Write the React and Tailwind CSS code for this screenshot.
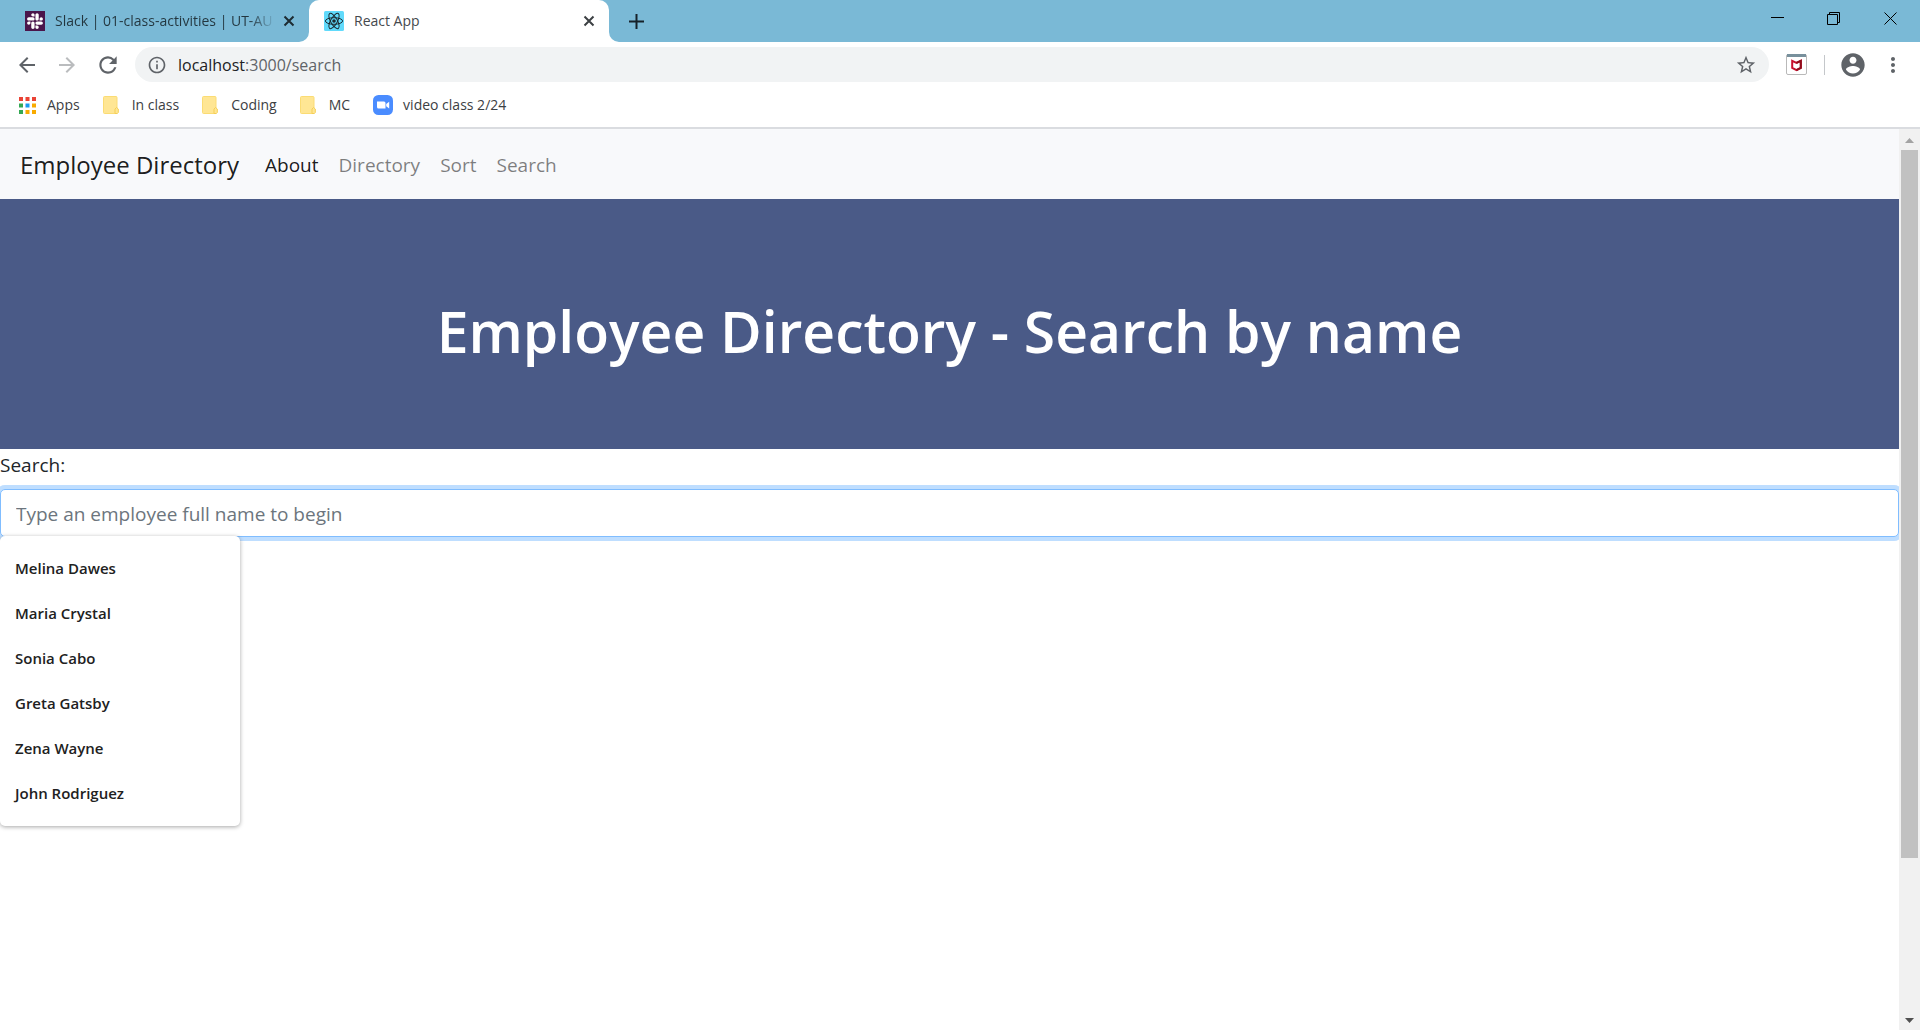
import React, { useState } from "react";
import { FaSlack } from "react-icons/fa";
import {
  MdArrowBack,
  MdArrowForward,
  MdInfoOutline,
  MdMoreVert,
  MdRefresh,
  MdStarBorder,
} from "react-icons/md";

const font = "font-['Segoe_UI','Open_Sans','Noto_Sans',sans-serif]";

function SlackIcon() {
  return (
    <span className="grid size-5 shrink-0 place-items-center bg-[#4a154b] text-white">
      <FaSlack className="size-[18px]" aria-hidden="true" />
    </span>
  );
}

function ReactIcon() {
  return (
    <svg viewBox="0 0 20 20" className="size-5 shrink-0" aria-hidden="true">
      <rect width="20" height="20" rx="1.5" fill="#61dafb" />
      <g fill="none" stroke="#1c2a30" strokeWidth="1">
        <ellipse cx="10" cy="10" rx="8.6" ry="3.3" />
        <ellipse cx="10" cy="10" rx="8.6" ry="3.3" transform="rotate(60 10 10)" />
        <ellipse cx="10" cy="10" rx="8.6" ry="3.3" transform="rotate(120 10 10)" />
      </g>
      <circle cx="10" cy="10" r="1.8" fill="#1c2a30" />
    </svg>
  );
}

function CloseIcon() {
  return (
    <svg viewBox="0 0 12 12" className="size-3" aria-hidden="true">
      <path d="M1.5 1.5l9 9M10.5 1.5l-9 9" stroke="currentColor" strokeWidth="2" />
    </svg>
  );
}

function TabFlare({ className }) {
  return (
    <svg viewBox="0 0 10 10" className={`absolute bottom-0 size-2.5 ${className}`} aria-hidden="true">
      <path d="M10 0v10H0A10 10 0 0 0 10 0z" fill="#fff" />
    </svg>
  );
}

function Tab({ icon, title, active }) {
  return (
    <div
      className={`relative flex h-full w-[300px] shrink-0 items-center pr-[11px] ${
        active ? "rounded-t-[10px] bg-white pl-[15px] text-[#45494d]" : "pl-4 text-[#23363f]"
      }`}
    >
      {active && <TabFlare className="-left-2.5" />}
      {icon}
      <button
        type="button"
        className={`ml-2.5 h-6 flex-1 text-left text-sm whitespace-nowrap ${
          active ? "" : "bg-linear-to-r from-[#23363f] from-88% to-transparent bg-clip-text text-transparent"
        }`}
      >
        {title}
      </button>
      <button type="button" aria-label="Close tab" className={`ml-1 grid size-[18px] place-items-center ${active ? "text-[#3c4043]" : "text-[#1d2b32]"}`}>
        <CloseIcon />
      </button>
      {active && <TabFlare className="-right-2.5 -scale-x-100" />}
    </div>
  );
}

function TitleBar() {
  return (
    <div className="flex h-[42px] shrink-0 bg-[#7ab9d6] pl-[9px]">
      <Tab icon={<SlackIcon />} title="Slack | 01-class-activities | UT-AU" />
      <Tab icon={<ReactIcon />} title="React App" active />
      <button type="button" aria-label="New tab" className="ml-4 grid w-[22px] place-items-center">
        <svg viewBox="0 0 15 15" className="size-[15px]" aria-hidden="true">
          <path d="M7.5 0v15M0 7.5h15" stroke="#16222a" strokeWidth="2" />
        </svg>
      </button>
      <div className="ml-auto flex h-9">
        <button type="button" aria-label="Minimize" className="grid w-14 place-items-center">
          <svg viewBox="0 0 13 13" className="size-[13px]" aria-hidden="true">
            <path d="M0 5.5h13" stroke="#000" />
          </svg>
        </button>
        <button type="button" aria-label="Restore" className="grid w-14 place-items-center">
          <svg viewBox="0 0 13 13" className="size-[13px]" fill="none" stroke="#000" aria-hidden="true">
            <path d="M.5 2.5h10v10H.5zM2.5 2.5v-2h10v10h-2" />
          </svg>
        </button>
        <button type="button" aria-label="Close" className="grid w-[59px] place-items-center">
          <svg viewBox="0 0 13 13" className="size-[13px]" aria-hidden="true">
            <path d="M.5.5l12 12M12.5.5l-12 12" stroke="#000" />
          </svg>
        </button>
      </div>
    </div>
  );
}

function ShieldIcon() {
  return (
    <svg viewBox="0 0 21 21" className="size-[21px]" aria-hidden="true">
      <rect x=".5" y=".5" width="20" height="20" rx="1.5" fill="#fff" stroke="#b9b9b9" />
      <path d="M1 0h19v3H1z" fill="#78909c" />
      <path d="M6.2 6.8l4.3 2 4.3-2v7l-4.3 2.4-4.3-2.4z" fill="none" stroke="#c8102e" strokeWidth="2" />
      <path d="M10.5 8.8l4.3-2v7l-4.3 2.4" fill="none" stroke="#8f0d1c" strokeWidth="2" />
    </svg>
  );
}

function AvatarIcon() {
  return (
    <svg viewBox="0 0 24 24" className="size-7" fill="currentColor" aria-hidden="true">
      <path d="M12 2C6.48 2 2 6.48 2 12s4.48 10 10 10 10-4.48 10-10S17.52 2 12 2zm0 3c1.66 0 3 1.34 3 3s-1.34 3-3 3-3-1.34-3-3 1.34-3 3-3zm0 14.2c-2.5 0-4.71-1.28-6-3.22.03-1.99 4-3.08 6-3.08 1.99 0 5.97 1.09 6 3.08-1.29 1.94-3.5 3.22-6 3.22z" />
    </svg>
  );
}

function Toolbar() {
  return (
    <div className="flex h-[45px] shrink-0 items-center bg-white pr-[15px] pl-[15px] text-[#5f6368]">
      <div className="flex gap-4">
        <button type="button" aria-label="Back"><MdArrowBack className="size-6" /></button>
        <button type="button" aria-label="Forward" className="text-[#babcbe]"><MdArrowForward className="size-6" /></button>
        <button type="button" aria-label="Reload"><MdRefresh className="size-[26px]" /></button>
      </div>
      <div className="ml-[14px] flex h-[35px] flex-1 items-center rounded-full bg-[#f1f3f4] px-3">
        <MdInfoOutline className="size-5 shrink-0" />
        <div className="relative ml-[11px] flex-1 text-base">
          <input
            aria-label="Address"
            defaultValue="localhost:3000/search"
            className="absolute inset-0 w-full bg-transparent text-transparent outline-none"
          />
          <span className="pointer-events-none"><span className="text-[#202124]">localhost</span>:3000/search</span>
        </div>
        <button type="button" aria-label="Bookmark this page"><MdStarBorder className="size-[22px]" /></button>
      </div>
      <button type="button" aria-label="McAfee" className="ml-[17px]"><ShieldIcon /></button>
      <div className="ml-[17px] h-5 w-px bg-[#c4c7ca]" />
      <button type="button" aria-label="Profile" className="ml-[14px]"><AvatarIcon /></button>
      <button type="button" aria-label="Menu" className="ml-[14px]"><MdMoreVert className="size-6" /></button>
    </div>
  );
}

function AppsIcon() {
  const colors = ["#ea4335", "#ea4335", "#ea4335", "#34a853", "#1a9bf0", "#f9ab00", "#34a853", "#f9ab00", "#f9ab00"];
  return (
    <svg viewBox="0 0 17 17" className="size-[17px]" aria-hidden="true">
      {colors.map((c, i) => (
        <rect key={i} x={(i % 3) * 6.5} y={Math.floor(i / 3) * 6.5} width="4" height="4" fill={c} />
      ))}
    </svg>
  );
}

function FolderIcon() {
  return (
    <svg viewBox="0 0 16 18" className="h-[18px] w-4" aria-hidden="true">
      <path d="M1.5.5H13a1 1 0 0 1 1 1v16H1.500a1 1 0 0 1-1-1v-15a1 1 0 0 1 1-1z" fill="#ffe694" stroke="#fbdc74" />
      <path d="M12 17.500v-4.500l1.500-1.500 1.800 1.500v3.500l-1 1z" fill="#ffe694" stroke="#f5cf57" />
    </svg>
  );
}

function ZoomIcon() {
  return (
    <svg viewBox="0 0 20 20" className="size-5" aria-hidden="true">
      <rect width="20" height="20" rx="5.500" fill="#4a8cff" />
      <path d="M4 6.500h7a1.500 1.500 0 0 1 1.500 1.500v5.500H5.500A1.500 1.500 0 0 1 4 12zM13.200 9l3-2.200v6.600l-3-2.200z" fill="#fff" />
    </svg>
  );
}

const bookmarks = [
  { label: "Apps", icon: <AppsIcon />, gap: "gap-[11px]" },
  { label: "In class", icon: <FolderIcon />, gap: "gap-[13px]" },
  { label: "Coding", icon: <FolderIcon />, gap: "gap-[13px]" },
  { label: "MC", icon: <FolderIcon />, gap: "gap-[13px]" },
  { label: "video class 2/24", icon: <ZoomIcon />, gap: "gap-[10px]" },
];

function BookmarksBar() {
  return (
    <div className="flex h-[42px] shrink-0 items-center gap-[23px] border-b-2 border-[#dadce0] bg-white pb-1 pl-[19px] text-sm text-[#3c4043]">
      {bookmarks.map((b) => (
        <a key={b.label} href="#" className={`flex items-center ${b.gap}`}>
          {b.icon}
          {b.label}
        </a>
      ))}
    </div>
  );
}

function NavBar() {
  return (
    <nav className="flex h-[70px] items-center bg-[#f8f9fb] px-5 pt-0.5">
      <a href="#" className="text-2xl text-black/90">Employee Directory</a>
      <div className="ml-[26px] flex gap-5 text-[19px] text-black/50">
        <a href="#" className="text-black/90">About</a>
        <a href="#">Directory</a>
        <a href="#">Sort</a>
        <a href="#">Search</a>
      </div>
    </nav>
  );
}

const names = ["Melina Dawes", "Maria Crystal", "Sonia Cabo", "Greta Gatsby", "Zena Wayne", "John Rodriguez"];

function SearchForm() {
  const [query, setQuery] = useState("");
  return (
    <form onSubmit={(e) => e.preventDefault()}>
      <label htmlFor="search" className="mb-2 block text-[19px] leading-8 text-[#212529]">Search:</label>
      <div className="relative">
        <input
          id="search"
          value={query}
          onChange={(e) => setQuery(e.target.value)}
          placeholder="Type an employee full name to begin"
          className="block h-12 w-full rounded-[5px] border border-[#80bdff] bg-white px-[15px] pt-0.5 text-[19px] text-[#495057] shadow-[0_0_0_4px_#bfdeff] outline-none placeholder:text-[#6c757d]"
        />
        <ul className="absolute top-[47px] left-0 w-60 rounded-[5px] bg-white py-[10px] shadow-[0_1px_4px_rgba(0,0,0,0.35)]">
          {names.map((name) => (
            <li key={name}>
              <button type="button" onClick={() => setQuery(name)} className="flex h-[45px] w-full items-center px-[15px] text-[15px] font-semibold text-[#212121]">
                {name}
              </button>
            </li>
          ))}
        </ul>
      </div>
    </form>
  );
}

function ScrollBar() {
  return (
    <div className="flex w-[21px] shrink-0 flex-col items-center bg-[#f1f1f1]" aria-hidden="true">
      <svg viewBox="0 0 21 21" className="size-[21px] shrink-0"><path d="M6 14l4.500-5 4.500 5z" fill="#a3a3a3" /></svg>
      <div className="w-full flex-1 px-0.5"><div className="h-[82.4%] bg-[#c1c1c1]" /></div>
      <svg viewBox="0 0 21 21" className="size-[21px] shrink-0"><path d="M6 9h9l-4.500 5z" fill="#505050" /></svg>
    </div>
  );
}

export default function App() {
  return (
    <div className={`flex h-screen flex-col overflow-hidden bg-white ${font}`}>
      <TitleBar />
      <Toolbar />
      <BookmarksBar />
      <div className="flex min-h-0 flex-1">
        <main className="min-w-0 flex-1 overflow-hidden">
          <NavBar />
          <header className="flex h-[250px] items-center justify-center bg-[#4a5a87] pt-4">
            <h1 className="text-[57px] font-semibold text-white">Employee Directory - Search by name</h1>
          </header>
          <SearchForm />
        </main>
        <ScrollBar />
      </div>
    </div>
  );
}
